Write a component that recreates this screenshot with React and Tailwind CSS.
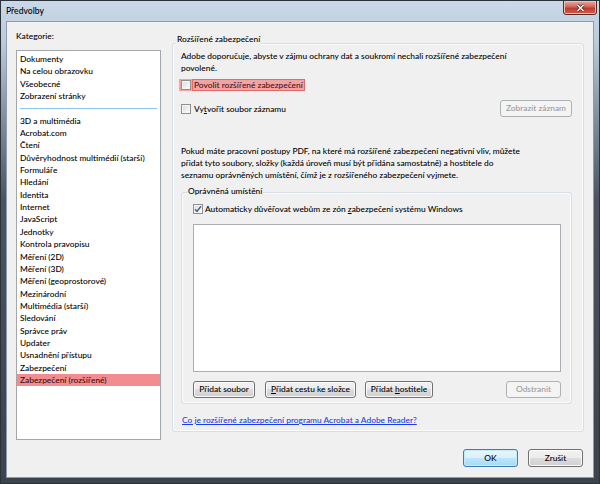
const categories = [
  'Dokumenty',
  'Na celou obrazovku',
  'Všeobecné',
  'Zobrazení stránky',
  null,
  '3D a multimédia',
  'Acrobat.com',
  'Čtení',
  'Důvěryhodnost multimédií (starší)',
  'Formuláře',
  'Hledání',
  'Identita',
  'Internet',
  'JavaScript',
  'Jednotky',
  'Kontrola pravopisu',
  'Měření (2D)',
  'Měření (3D)',
  'Měření (geoprostorové)',
  'Mezinárodní',
  'Multimédia (starší)',
  'Sledování',
  'Správce práv',
  'Updater',
  'Usnadnění přístupu',
  'Zabezpečení',
  'Zabezpečení (rozšířené)',
];

const Checkbox = ({ checked }) => (
  <span className="w-[10px] h-[10px] shrink-0 flex items-center justify-center border border-[#8e8f8f] bg-[linear-gradient(135deg,#d8d8d8,#ffffff)] shadow-[inset_0_0_0_1px_#f6f6f6]">
    {checked && (
      <svg width="8" height="8" viewBox="0 0 8 8">
        <path d="M1 4.3 L3 6.4 L7 1.2" fill="none" stroke="#4a5f8f" strokeWidth="1.5" />
      </svg>
    )}
  </span>
);

const Button = ({ children, width, disabled, primary }) => {
  const base = 'h-full flex items-center justify-center rounded-[3px] border leading-none whitespace-nowrap';
  const style = disabled
    ? 'border-[#adb2b5] bg-[#f4f4f4] text-[#9a9a9a]'
    : primary
      ? 'border-[#3c7fb1] bg-[linear-gradient(#eaf6fd,#d9f0fc_50%,#bee6fd_50%,#a7d9f5)] shadow-[inset_0_0_0_1px_#c4e9fb] text-black'
      : 'border-[#707070] bg-[linear-gradient(#f2f2f2,#ebebeb_50%,#dddddd_50%,#cfcfcf)] shadow-[inset_0_0_0_1px_#fbfbfb] text-black';
  return <div className={`${base} ${style} ${width}`}>{children}</div>;
};

export default function App() {
  return (
    <div className="w-[600px] h-[484px] flex flex-col px-[5px] pb-[5px] border border-[#2a323c] bg-[linear-gradient(#cad8e7_0px,#bccbdc_40px,#8593a3_110px,#4a5460_200px,#3b434d_100%)] font-['Lato','DejaVu_Sans',sans-serif] font-medium text-[8.4px] text-black overflow-hidden">
      {/* title bar */}
      <div className="h-[20px] flex items-start justify-between">
        <span className="pt-[3px] text-[8.6px] leading-[14px] text-black">Předvolby</span>
        <div className="-mr-[3px] -mt-[1px] w-[34px] h-[15px] rounded-b-[3px] border border-[#5a2a25] bg-[linear-gradient(#e8a99f,#d0675a_45%,#c0392b_55%,#cf5f4c)] shadow-[inset_0_0_0_1px_#f0bfb8] flex items-center justify-center">
          <svg width="9" height="8" viewBox="0 0 9 8">
            <path d="M1.5 1 L7.5 7 M7.5 1 L1.5 7" stroke="#3a1a16" strokeWidth="2.6" />
            <path d="M1.5 1 L7.5 7 M7.5 1 L1.5 7" stroke="#ffffff" strokeWidth="1.5" />
          </svg>
        </div>
      </div>

      {/* client area */}
      <div className="flex-1 flex flex-col border border-[#8c9cae] bg-[#f0f0f0]">
        <div className="flex pt-[8px] pl-[9px] pr-[9px]">
          {/* left column */}
          <div className="w-[145px] flex flex-col">
            <span className="leading-[13px]">Kategorie:</span>
            <div className="mt-[7px] h-[390px] border border-[#a3a6ab] bg-white pt-[2px]">
              {categories.map((c, i) =>
                c === null ? (
                  <div key={i} className="h-[12.35px] flex items-center px-[3px]">
                    <div className="h-px w-full bg-[#8fc4ee]" />
                  </div>
                ) : (
                  <div
                    key={i}
                    className={`h-[12.35px] leading-[12.35px] pl-[3px] whitespace-nowrap ${
                      i === categories.length - 1 ? 'bg-[#f28c8e] text-[#3a0f10]' : ''
                    }`}
                  >
                    {c}
                  </div>
                ),
              )}
            </div>
          </div>

          {/* right group */}
          <div className="ml-[11px] mt-[13px] w-[412px] h-[389px] relative border border-[#d5dfe5] rounded-[3px] shadow-[inset_0_0_0_1px_#fbfbfb] flex flex-col pl-[8px] pr-[11px] leading-[12px]">
            <span className="absolute left-[3px] -top-[11px] px-[1px] bg-[#f0f0f0] leading-[12px]">Rozšířené zabezpečení</span>
            <p className="pt-[6px]">
              Adobe doporučuje, abyste v zájmu ochrany dat a soukromí nechali rozšířené zabezpečení
              <br />
              povolené.
            </p>
            <div className="mt-[5px] -ml-[2px] self-start h-[12px] flex items-center bg-[#f4a3a3] pl-[2px]">
              <Checkbox />
              <span className="ml-[1px] h-[12px] px-[1px] border border-[#e46a6a] leading-[10px] text-[#4a1212]">
                Povolit rozšířené zabezpečení
              </span>
            </div>
            <div className="mt-[9px] h-[17px] flex items-center justify-between">
              <div className="flex items-center gap-[3px]">
                <Checkbox />
                <span>
                  Vy<u>t</u>vořit soubor záznamu
                </span>
              </div>
              <Button width="w-[72px]" disabled>
                Zobrazit záznam
              </Button>
            </div>
            <p className="mt-[28px]">
              Pokud máte pracovní postupy PDF, na které má rozšířené zabezpečení negativní vliv, můžete
              <br />
              přidat tyto soubory, složky (každá úroveň musí být přidána samostatně) a hostitele do
              <br />
              seznamu oprávněných umístění, čímž je z rozšířeného zabezpečení vyjmete.
            </p>

            {/* inner group */}
            <div className="mt-[11px] h-[212px] relative border border-[#d5dfe5] rounded-[3px] shadow-[inset_0_0_0_1px_#fbfbfb] flex flex-col pl-[11px] pr-[10px]">
              <span className="absolute left-[5px] -top-[8px] px-[1px] bg-[#f0f0f0]">Oprávněná umístění</span>
              <div className="mt-[10px] h-[12px] flex items-center gap-[2px]">
                <Checkbox checked />
                <span>
                  Automaticky důvěřovat webům ze zón <u>z</u>abezpečení systému Windows
                </span>
              </div>
              <div className="mt-[9px] h-[148px] border border-[#abadb3] bg-white" />
              <div className="mt-[9px] h-[17px] flex">
                <Button width="w-[62px]">Přidat soubor</Button>
                <div className="ml-[10px]">
                  <Button width="w-[91px]">
                    <span>
                      <u>P</u>řidat cestu ke složce
                    </span>
                  </Button>
                </div>
                <div className="ml-[9px]">
                  <Button width="w-[68px]">
                    <span>
                      Přidat <u>h</u>ostitele
                    </span>
                  </Button>
                </div>
                <div className="ml-auto">
                  <Button width="w-[55px]" disabled>
                    Odstranit
                  </Button>
                </div>
              </div>
            </div>

            <a className="mt-[10px] ml-[1px] self-start text-[#1a3ce8] underline">
              Co je rozšířené zabezpečení programu Acrobat a Adobe Reader?
            </a>
          </div>
        </div>

        {/* dialog buttons */}
        <div className="mt-[9px] h-[18px] flex justify-end gap-[10px] pr-[10px]">
          <Button width="w-[55px]" primary>
            OK
          </Button>
          <Button width="w-[55px]">Zrušit</Button>
        </div>
      </div>
    </div>
  );
}
